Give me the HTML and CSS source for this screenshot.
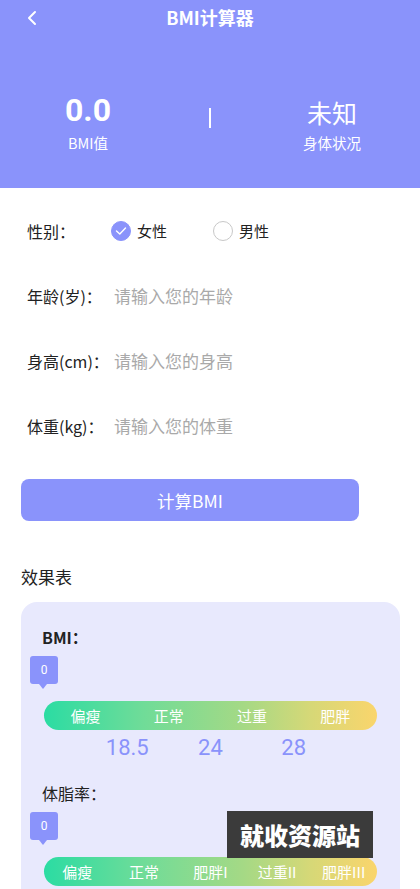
FILE: index.html
```html
<!DOCTYPE html>
<html lang="zh">
<head>
<meta charset="utf-8">
<title>BMI计算器</title>
<link rel="stylesheet" href="styles.css">
</head>
<body>
<header class="header">
  <div class="nav">
    <span class="back"><svg width="12" height="16" viewBox="0 0 12 16"><path d="M9 2 L3 8 L9 14" fill="none" stroke="#fff" stroke-width="2" stroke-linecap="round" stroke-linejoin="round"/></svg></span>
    <h1 class="title">BMI计算器</h1>
    <span></span>
  </div>
  <div class="stats">
    <div class="stat">
      <div class="stat-value num">0.0</div>
      <div class="stat-label">BMI值</div>
    </div>
    <div class="divider-wrap"><span class="divider"></span></div>
    <div class="stat">
      <div class="stat-value cn">未知</div>
      <div class="stat-label">身体状况</div>
    </div>
  </div>
</header>

<main class="form">
  <div class="row">
    <span class="label">性别：</span>
    <div class="radios">
      <span class="radio">
        <span class="circle checked"><svg width="12" height="10" viewBox="0 0 12 10"><path d="M1.5 5 L4.8 8 L10.5 2" fill="none" stroke="#fff" stroke-width="1.4" stroke-linecap="round" stroke-linejoin="round"/></svg></span>
        女性
      </span>
      <span class="radio">
        <span class="circle"></span>
        男性
      </span>
    </div>
  </div>
  <div class="row">
    <span class="label">年龄(岁)：</span>
    <span class="placeholder">请输入您的年龄</span>
  </div>
  <div class="row">
    <span class="label">身高(cm)：</span>
    <span class="placeholder">请输入您的身高</span>
  </div>
  <div class="row">
    <span class="label">体重(kg)：</span>
    <span class="placeholder">请输入您的体重</span>
  </div>
  <button class="btn">计算BMI</button>
</main>

<section class="effect">
  <h2 class="effect-title">效果表</h2>
  <div class="card">
    <div class="card-title">BMI：</div>
    <div class="badge">0</div>
    <div class="bar">
      <span>偏瘦</span><span>正常</span><span>过重</span><span>肥胖</span>
    </div>
    <div class="marks">
      <span></span><span>18.5</span><span>24</span><span>28</span><span></span>
    </div>
    <div class="card-title normal">体脂率：</div>
    <div class="badge">0</div>
    <div class="bar five">
      <span>偏瘦</span><span>正常</span><span>肥胖I</span><span>过重II</span><span>肥胖III</span>
    </div>
  </div>
</section>

<div class="watermark">就收资源站</div>
</body>
</html>
```

FILE: styles.css
```css
* { box-sizing: border-box; }
html, body { margin: 0; padding: 0; }
body {
  width: 420px;
  height: 889px;
  overflow: hidden;
  position: relative;
  background: #fff;
  font-family: "Noto Sans CJK SC", "Noto Sans", sans-serif;
  color: #222;
}
.header {
  background: #8a93fb;
  height: 188px;
  color: #fff;
}
.nav {
  height: 34px;
  display: grid;
  grid-template-columns: 60px 1fr 60px;
  align-items: center;
}
.back {
  display: flex;
  align-items: center;
  padding-left: 26px;
  padding-top: 1px;
}
.title {
  margin: 0;
  text-align: center;
  font-size: 18px;
  font-weight: 700;
  line-height: 34px;
}
.stats {
  margin-top: 56px;
  display: grid;
  grid-template-columns: 176px 1fr 176px;
}
.stat {
  display: flex;
  flex-direction: column;
  align-items: center;
}
.stat-value {
  height: 40px;
  line-height: 40px;
}
.stat-value.num {
  font-family: Roboto, "Noto Sans CJK SC", sans-serif;
  font-weight: 700;
  font-size: 32px;
}
.stat-value.cn {
  font-size: 25px;
  line-height: 44px;
}
.stat-label {
  margin-top: 3px;
  font-size: 14.5px;
  line-height: 20px;
}
.divider-wrap {
  display: flex;
  justify-content: center;
  padding-top: 18px;
}
.divider {
  width: 2px;
  height: 20px;
  background: #fff;
}
.form {
  padding: 10px 0 0 0;
}
.row {
  height: 65px;
  display: flex;
  align-items: center;
  padding-left: 27px;
  font-size: 16px;
}
.label {
  width: 87px;
  flex: none;
  color: #222;
}
.placeholder {
  color: #a9a9a9;
  font-size: 17px;
}
.radios {
  display: flex;
  margin-left: -3px;
  gap: 46px;
}
.radio {
  display: flex;
  align-items: center;
  gap: 6px;
  color: #222;
  font-size: 15px;
}
.circle {
  width: 20px;
  height: 20px;
  border-radius: 50%;
  border: 1px solid #c8c8c8;
  display: flex;
  align-items: center;
  justify-content: center;
}
.circle.checked {
  background: #8a93fb;
  border-color: #8a93fb;
}
.btn {
  display: block;
  margin: 21px 0 0 21px;
  width: 338px;
  height: 42px;
  border: 0;
  border-radius: 8px;
  background: #8a93fb;
  color: #fff;
  font-family: "Noto Sans CJK SC", sans-serif;
  font-size: 17.5px;
  padding: 0;
}
.effect {
  padding: 0 20px 0 21px;
}
.effect-title {
  margin: 44px 0 0 0;
  font-size: 17px;
  font-weight: 400;
  line-height: 24px;
  color: #222;
}
.card {
  margin-top: 13px;
  background: #e8e9fd;
  border-radius: 16px;
  padding: 23px 23px 20px 23px;
  height: 320px;
}
.card-title {
  font-size: 16px;
  font-weight: 700;
  line-height: 24px;
  margin-left: -2px;
}
.card-title.normal {
  font-weight: 400;
  margin-top: 21px;
}
.badge {
  position: relative;
  margin: 7px 0 0 -14px;
  width: 28px;
  height: 28px;
  border-radius: 3px;
  background: #8a93fb;
  color: #fff;
  font-family: Roboto, sans-serif;
  font-size: 12px;
  display: flex;
  align-items: center;
  justify-content: center;
}
.badge::after {
  content: "";
  position: absolute;
  left: 9px;
  bottom: -5px;
  border-left: 4px solid transparent;
  border-right: 4px solid transparent;
  border-top: 5px solid #8a93fb;
}
.bar {
  margin-top: 17px;
  height: 29px;
  border-radius: 15px;
  background: linear-gradient(90deg, #2bdca3 0%, #70dc98 30%, #a5d985 60%, #d6d877 80%, #fad56c 100%);
  display: grid;
  grid-template-columns: repeat(4, 1fr);
  align-items: center;
  color: #fff;
  font-size: 15px;
  text-align: center;
}
.bar.five {
  grid-template-columns: repeat(5, 1fr);
}
.marks {
  display: grid;
  grid-template-columns: 41.6px 83.25px 83.25px 83.25px 41.6px;
  margin-top: 6px;
  height: 24px;
  line-height: 24px;
  text-align: center;
  font-family: Roboto, sans-serif;
  font-size: 22px;
  color: #8a93fb;
}
.watermark {
  position: absolute;
  left: 227px;
  top: 811px;
  width: 146px;
  height: 47px;
  background: #3b3b3b;
  color: #fff;
  font-size: 24px;
  font-weight: 900;
  display: flex;
  align-items: center;
  justify-content: center;
}
```
